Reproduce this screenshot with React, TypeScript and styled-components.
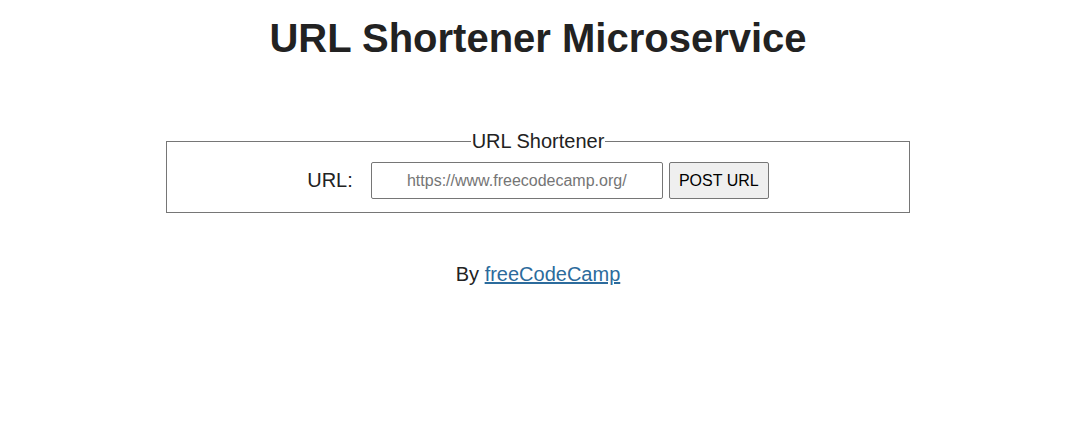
import React from "react";
import styled, { createGlobalStyle } from "styled-components";

const Global = createGlobalStyle`
  html, body { margin: 0; padding: 0; background: #fff; }
  body {
    font-family: "Liberation Sans", Arial, Helvetica, sans-serif;
    color: #222;
    font-size: 16px;
  }
`;

const Page = styled.div`
  display: flex;
  flex-direction: column;
  align-items: center;
  padding: 0 8px 0 0;
  text-align: center;
`;

const Title = styled.h1`
  font-size: 40px;
  font-weight: bold;
  margin: 15px 0 0;
  line-height: 46px;
  color: #222;
`;

const Form = styled.form`
  margin-top: 69px;
  width: 744px;
`;

const Fieldset = styled.fieldset`
  margin: 0;
  padding: 10px 16px 13px;
  border: 1px solid #767676;
  display: flex;
  justify-content: center;
  align-items: center;
`;

const Legend = styled.legend`
  font-size: 20px;
  padding: 0 1px;
  color: #222;
  line-height: 22px;
`;

const Label = styled.label`
  font-size: 20px;
  margin-right: 18px;
  color: #222;
`;

const Input = styled.input`
  box-sizing: border-box;
  width: 292px;
  height: 37px;
  border: 1px solid #767676;
  border-radius: 2px;
  font-family: "Liberation Sans", Arial, sans-serif;
  font-size: 16px;
  text-align: center;
  padding: 0 8px;
  color: #222;
  &::placeholder { color: #757575; }
`;

const Button = styled.button`
  box-sizing: border-box;
  margin-left: 6px;
  width: 100px;
  height: 37px;
  border: 1px solid #767676;
  border-radius: 2px;
  background: #efefef;
  font-family: "Liberation Sans", Arial, sans-serif;
  font-size: 16px;
  color: #000;
  padding: 0;
`;

const Footer = styled.p`
  margin: 49px 0 0;
  font-size: 20px;
  line-height: 24px;
  color: #222;
`;

const Link = styled.a`
  color: #2c6b9c;
  text-decoration: underline;
`;

export default function App() {
  return (
    <>
      <Global />
      <Page>
        <Title>URL Shortener Microservice</Title>
        <Form onSubmit={(e) => e.preventDefault()}>
          <Fieldset>
            <Legend>URL Shortener</Legend>
            <Label htmlFor="url_input">URL:</Label>
            <Input id="url_input" type="text" placeholder="https://www.freecodecamp.org/" />
            <Button type="submit">POST URL</Button>
          </Fieldset>
        </Form>
        <Footer>
          By <Link href="#">freeCodeCamp</Link>
        </Footer>
      </Page>
    </>
  );
}
